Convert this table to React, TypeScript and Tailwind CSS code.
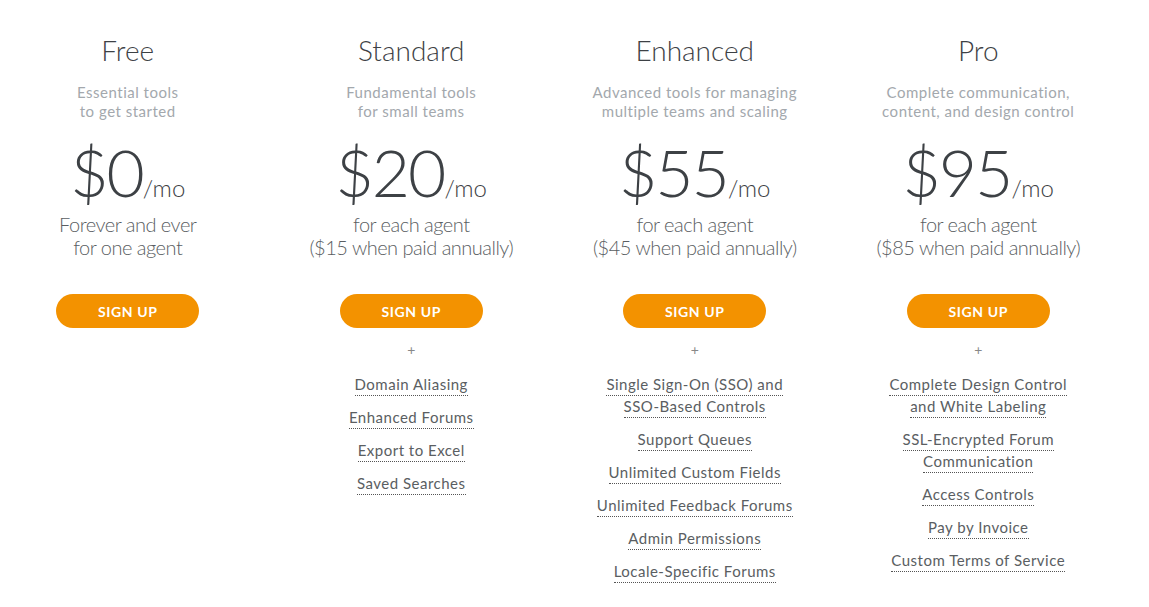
import React from 'react';

interface Plan {
  name: string;
  tagline: [string, string];
  price: string;
  note: [string, string];
  features: string[][];
}

const plans: Plan[] = [
  {
    name: 'Free',
    tagline: ['Essential tools', 'to get started'],
    price: '$0',
    note: ['Forever and ever', 'for one agent'],
    features: [],
  },
  {
    name: 'Standard',
    tagline: ['Fundamental tools', 'for small teams'],
    price: '$20',
    note: ['for each agent', '($15 when paid annually)'],
    features: [['Domain Aliasing'], ['Enhanced Forums'], ['Export to Excel'], ['Saved Searches']],
  },
  {
    name: 'Enhanced',
    tagline: ['Advanced tools for managing', 'multiple teams and scaling'],
    price: '$55',
    note: ['for each agent', '($45 when paid annually)'],
    features: [
      ['Single Sign-On (SSO) and', 'SSO-Based Controls'],
      ['Support Queues'],
      ['Unlimited Custom Fields'],
      ['Unlimited Feedback Forums'],
      ['Admin Permissions'],
      ['Locale-Specific Forums'],
    ],
  },
  {
    name: 'Pro',
    tagline: ['Complete communication,', 'content, and design control'],
    price: '$95',
    note: ['for each agent', '($85 when paid annually)'],
    features: [
      ['Complete Design Control', 'and White Labeling'],
      ['SSL-Encrypted Forum', 'Communication'],
      ['Access Controls'],
      ['Pay by Invoice'],
      ['Custom Terms of Service'],
    ],
  },
];

const PlanColumn: React.FC<{ plan: Plan }> = ({ plan }) => (
  <div className="flex flex-col items-center text-center font-['Lato',sans-serif]">
    <h2 className="mt-[32px] text-[28px] leading-[36px] font-light text-[#3d4145]">{plan.name}</h2>
    <p className="mt-[15px] text-[15px] leading-[19px] tracking-[0.5px] text-[#a3a8ad]">
      {plan.tagline[0]}
      <br />
      {plan.tagline[1]}
    </p>
    <div className="mt-[11px] flex items-baseline text-[#3d4145] font-light">
      <span className="text-[66px] leading-[80px] tracking-[-2px]">{plan.price}</span>
      <span className="text-[24px] leading-[24px]">/mo</span>
    </div>
    <p className="mt-[1px] text-[20px] leading-[23px] tracking-[-0.5px] text-[#5a5e62] font-light">
      {plan.note[0]}
      <br />
      {plan.note[1]}
    </p>
    <button className="mt-[35px] w-[143px] h-[34px] rounded-full bg-[#f39200] text-white text-[14px] font-bold tracking-[0.6px]">
      SIGN UP
    </button>
    {plan.features.length > 0 && (
      <div className="mt-[13px] flex flex-col items-center">
        <span className="text-[14px] leading-[18px] text-[#888]">+</span>
        <ul className="mt-[15px] flex flex-col items-center gap-[11px]">
          {plan.features.map((lines, i) => (
            <li key={i} className="flex flex-col items-center text-[15px] tracking-[0.5px] text-[#5a5e62]">
              {lines.map((line, j) => (
                <span key={j} className="border-b border-dotted border-[#555] leading-[20px] pb-[1px]">
                  {line}
                </span>
              ))}
            </li>
          ))}
        </ul>
      </div>
    )}
  </div>
);

export default function App() {
  return (
    <div className="w-[1149px] h-[607px] overflow-hidden bg-white">
      <div className="-ml-[14px] w-[1134px] grid grid-cols-4">
        {plans.map((p) => (
          <PlanColumn key={p.name} plan={p} />
        ))}
      </div>
    </div>
  );
}
